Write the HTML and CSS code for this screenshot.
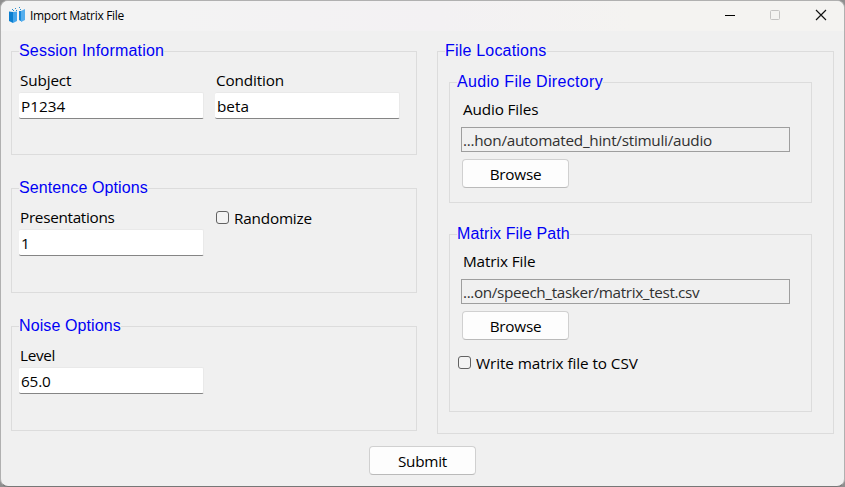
FILE: index.html
```
<!DOCTYPE html>
<html lang="en">
<head>
<meta charset="utf-8">
<title>Import Matrix File</title>
<link rel="stylesheet" href="styles.css">
</head>
<body>
<div class="window">
  <header class="titlebar">
    <svg class="app-icon" width="18" height="18" viewBox="0 0 18 18">
      <path fill="#0b7fd0" d="M1 4.500L5 5v11l-4-2z"/>
      <path fill="#45a5ea" d="M5 5l4-.5v9.500l-4 2z"/>
      <path fill="#1988d8" d="M11 4h2.500v10.500L11 13z"/>
      <path fill="#55aeed" d="M13 4l4-2v11l-4 2z"/>
      <path fill="#2b8fce" d="M4 2h1v1H4zM7 1h1v1H7zM11 0h1v1h-1zM5 3h1v1H5zM8 3h1v1H8zM12 2h1v1h-1z"/>
    </svg>
    <h1 class="title">Import Matrix File</h1>
    <svg class="controls" width="120" height="30" viewBox="0 0 120 30" fill="none">
      <path d="M5 15.500h10" stroke="#000"/>
      <rect x="50.500" y="10.500" width="9" height="9" rx="1" stroke="#c4c3c2"/>
      <path d="M96 10l10 10M106 10l-10 10" stroke="#111" stroke-width="1.150"/>
    </svg>
  </header>
  <main class="content">
    <div class="column options">
      <section class="group session">
        <h2 class="legend wide">Session Information</h2>
        <div class="fields">
          <label class="field"><span class="label">Subject</span><span class="entry">P1234</span></label>
          <label class="field"><span class="label">Condition</span><span class="entry">beta</span></label>
        </div>
      </section>
      <section class="group sentence">
        <h2 class="legend">Sentence Options</h2>
        <div class="fields">
          <label class="field"><span class="label">Presentations</span><span class="entry">1</span></label>
          <label class="check"><span class="box"></span><span class="check-text">Randomize</span></label>
        </div>
      </section>
      <section class="group noise">
        <h2 class="legend">Noise Options</h2>
        <div class="fields">
          <label class="field"><span class="label">Level</span><span class="entry">65.0</span></label>
        </div>
      </section>
    </div>
    <section class="group files">
      <h2 class="legend wide">File Locations</h2>
      <section class="group audio">
        <h2 class="legend wider">Audio File Directory</h2>
        <span class="label">Audio Files</span>
        <div class="path audio-path">...hon/automated_hint/stimuli/audio</div>
        <button class="button" type="button">Browse</button>
      </section>
      <section class="group matrix">
        <h2 class="legend">Matrix File Path</h2>
        <span class="label">Matrix File</span>
        <div class="path matrix-path">...on/speech_tasker/matrix_test.csv</div>
        <button class="button" type="button">Browse</button>
        <label class="check"><span class="box"></span><span class="check-text">Write matrix file to CSV</span></label>
      </section>
    </section>
  </main>
  <footer class="footer"><button class="button" type="button">Submit</button></footer>
</div>
</body>
</html>
```

FILE: styles.css
```
* { box-sizing: border-box; }
body {
  margin: 0;
  background: #8f8f8f;
  font: 15.3px/20px "Open Sans", sans-serif;
  letter-spacing: -0.15px;
  color: #000;
  overflow: hidden;
}
.window {
  width: 845px;
  height: 487px;
  border: 1px solid #b0b0b0;
  border-bottom-color: #777;
  border-radius: 8px;
  background: #f0f0f0;
  overflow: hidden;
}
.titlebar {
  display: flex;
  height: 30px;
  padding: 0 4px 0 7px;
  background: linear-gradient(90deg, #f3f3f3 20%, #f3f1f3 52%, #f4f3f1 75%);
}
.app-icon { margin-top: 6px; }
.title {
  margin: 0 0 0 4px;
  font-size: 12px;
  font-weight: 400;
  line-height: 29px;
  letter-spacing: -0.3px;
}
.controls { margin: -1px 0 0 auto; }
.content { display: flex; gap: 20px; padding: 20px 10px 0; }
.column { display: flex; flex-direction: column; width: 406px; gap: 33px; }
.group {
  display: flex;
  flex-direction: column;
  align-items: flex-start;
  border: 1px solid #dcdcdc;
}
.options .group { height: 105px; padding-left: 7px; }
.options .session { height: 104px; }
.legend {
  margin: -10px 0 0;
  font: 400 16px/18px "Liberation Sans", sans-serif;
  letter-spacing: 0.1px;
  color: #0000f5;
  background: #f0f0f0;
}
.wide { letter-spacing: 0.2px; }
.wider { letter-spacing: 0.32px; }
.fields { display: flex; gap: 12px; padding-top: 10px; }
.field { display: flex; flex-direction: column; width: 184px; }
.label { display: block; padding-left: 1px; letter-spacing: -0.3px; }
.session .label { letter-spacing: -0.15px; }
.files .label { letter-spacing: -0.15px; }
.entry {
  width: 185px;
  height: 27px;
  margin-top: 2px;
  padding: 3px 2px 0;
  border: 1px solid #e9e9e9;
  border-left: 0;
  border-bottom-color: #858585;
  border-radius: 2px;
  background: #fff;
}
.session .entry { letter-spacing: 0; }
.check { display: flex; align-items: center; gap: 5px; letter-spacing: -0.2px; }
.box {
  width: 13px;
  height: 13px;
  border: 1px solid #626262;
  border-radius: 3px;
  background: #f3f3f3;
}
.sentence .check { height: 20px; margin: 1px 0 0 1px; }
.sentence .check .box { margin-top: -2px; }
.files { width: 397px; height: 383px; padding-left: 7px; }
.files .group { width: 363px; margin-left: 4px; padding-left: 7px; }
.files .audio { height: 121px; margin-top: 22px; }
.files .matrix { height: 178px; margin-top: 31px; }
.files .label { margin: 8px 0 0 5px; }
.path {
  width: 329px;
  height: 25px;
  margin: 8px 0 0 4px;
  padding: 2px 1px 0;
  border: 1px solid #9e9e9e;
  color: #303030;
  white-space: nowrap;
}
.audio-path { letter-spacing: -0.27px; }
.matrix-path { letter-spacing: -0.37px; }
.button {
  width: 107px;
  height: 29px;
  padding: 1px 0 0;
  border: 1px solid #d0d0d0;
  border-bottom-color: #bababa;
  border-radius: 4px;
  background: #fdfdfd;
  font: inherit;
  letter-spacing: -0.25px;
  color: #000;
}
.group .button { margin: 7px 0 0 5px; }
.matrix .check { margin: 13px 0 0 1px; letter-spacing: -0.08px; }
.matrix .check .box { margin-top: -1px; }
.footer { display: flex; justify-content: center; padding-top: 12px; }
```
